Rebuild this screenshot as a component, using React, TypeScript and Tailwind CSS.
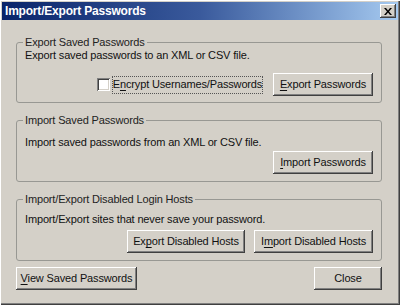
const raised =
  "shadow-[inset_-1px_-1px_#404040,inset_1px_1px_#ffffff,inset_-2px_-2px_#808080,inset_2px_2px_#d4d0c8]";

function Btn({ w, children }: { w: string; children: React.ReactNode }) {
  return (
    <button className={`${w} h-[23px] shrink-0 bg-[#d4d0c8] ${raised} text-[11px] leading-[13px] text-[#111] flex items-center justify-center`}>
      <span className="whitespace-nowrap">{children}</span>
    </button>
  );
}

function U({ children }: { children: React.ReactNode }) {
  return <span className="underline underline-offset-[2px]">{children}</span>;
}

function Legend({ children }: { children: React.ReactNode }) {
  return <legend className="-ml-[2px] px-[2px] leading-[13px] text-[#222]">{children}</legend>;
}

export default function App() {
  return (
    <div className="w-[400px] h-[305px] bg-[#d4d0c8] p-[2px] font-['Liberation_Sans',sans-serif] text-[11px] tracking-[-0.15px] text-[#111] shadow-[inset_1px_1px_#ffffff,inset_-1px_-1px_#404040,inset_-2px_-2px_#808080]">
      <div className="h-[18px] flex items-center justify-between pl-[3px] pr-[2px] bg-gradient-to-r from-[#0a246a] via-[#3a5a9c] to-[#a6caf0]">
        <span className="text-white font-bold text-[12px] leading-[14px] tracking-[-0.2px]">Import/Export Passwords</span>
        <button className={`w-[16px] h-[14px] bg-[#d4d0c8] ${raised} flex items-center justify-center`}>
          <svg width="8" height="7" viewBox="0 0 8 7">
            <path d="M0 0h2l2 2.5L6 0h2L5 3.5 8 7H6L4 4.5 2 7H0l3-3.5z" fill="#000" />
          </svg>
        </button>
      </div>

      <div className="pl-[14px] pr-[16px]">
        <fieldset className="mt-[16px] h-[67px] border border-[#989893] rounded-[3px] pl-[8px] pr-[8px] pb-[6px]">
          <Legend>Export Saved Passwords</Legend>
          <p className="leading-[13px]">Export saved passwords to an XML or CSV file.</p>
          <div className="mt-[11px] flex items-center justify-end">
            <span className="w-[13px] h-[13px] bg-white shadow-[inset_1px_1px_#808080,inset_-1px_-1px_#ffffff,inset_2px_2px_#404040,inset_-2px_-2px_#d4d0c8]" />
            <span className="ml-[2px] w-[151px] h-[18px] flex items-center justify-center border border-dotted border-[#555]">
              <span className="whitespace-nowrap">
                E<U>n</U>crypt Usernames/Passwords
              </span>
            </span>
            <span className="w-[10px]" />
            <Btn w="w-[100px]">
              <U>E</U>xport Passwords
            </Btn>
          </div>
        </fieldset>

        <fieldset className="mt-[11px] h-[68px] border border-[#989893] rounded-[3px] pl-[8px] pr-[8px] pb-[7px]">
          <Legend>Import Saved Passwords</Legend>
          <p className="mt-[9px] leading-[13px]">Import saved passwords from an XML or CSV file.</p>
          <div className="mt-[2px] flex justify-end">
            <Btn w="w-[100px]">
              <U>I</U>mport Passwords
            </Btn>
          </div>
        </fieldset>

        <fieldset className="mt-[11px] h-[68px] border border-[#989893] rounded-[3px] pl-[8px] pr-[8px] pb-[7px]">
          <Legend>Import/Export Disabled Login Hosts</Legend>
          <p className="mt-[7px] leading-[13px]">Import/Export sites that never save your password.</p>
          <div className="mt-[4px] flex justify-end gap-[9px]">
            <Btn w="w-[118px]">
              Ex<U>p</U>ort Disabled Hosts
            </Btn>
            <Btn w="w-[119px]">
              I<U>m</U>port Disabled Hosts
            </Btn>
          </div>
        </fieldset>

        <div className="mt-[6px] flex justify-between">
          <Btn w="w-[121px]">
            <U>V</U>iew Saved Passwords
          </Btn>
          <Btn w="w-[68px]">Close</Btn>
        </div>
      </div>
    </div>
  );
}
